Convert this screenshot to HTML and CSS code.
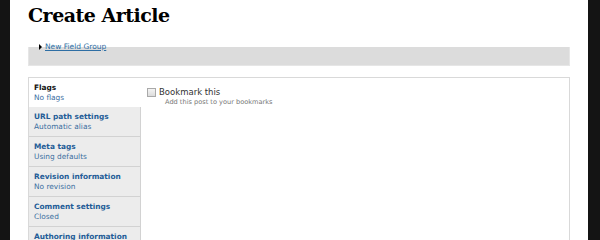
FILE: index.html
```html
<!DOCTYPE html>
<html>
<head>
<meta charset="utf-8">
<link rel="stylesheet" href="styles.css">
</head>
<body>
<div class="page">
  <h1 class="title">Create Article</h1>
  <fieldset class="group">
    <legend class="group-legend"><span class="tri"></span><a href="#" class="group-link">New Field Group</a></legend>
  </fieldset>
  <div class="vtabs">
    <ul class="tabs">
      <li class="tab selected"><strong class="tab-title">Flags</strong><span class="tab-sum">No flags</span></li>
      <li class="tab"><strong class="tab-title">URL path settings</strong><span class="tab-sum">Automatic alias</span></li>
      <li class="tab"><strong class="tab-title">Meta tags</strong><span class="tab-sum">Using defaults</span></li>
      <li class="tab"><strong class="tab-title">Revision information</strong><span class="tab-sum">No revision</span></li>
      <li class="tab"><strong class="tab-title">Comment settings</strong><span class="tab-sum">Closed</span></li>
      <li class="tab"><strong class="tab-title">Authoring information</strong><span class="tab-sum">By admin</span></li>
    </ul>
    <div class="pane">
      <label class="check"><span class="box"></span>Bookmark this</label>
      <div class="desc">Add this post to your bookmarks</div>
    </div>
  </div>
</div>
</body>
</html>
```

FILE: styles.css
```css
html, body {
  margin: 0;
  padding: 0;
  background: #141414;
  height: 240px;
  overflow: hidden;
}
.page {
  margin: 0 12px 0 10px;
  background: #fff;
  height: 240px;
  padding: 0 18px 0 18px;
  box-sizing: border-box;
  font-family: "DejaVu Sans", Verdana, sans-serif;
  overflow: hidden;
}
.title {
  margin: 0;
  padding-top: 3px;
  font-family: "DejaVu Serif", Georgia, serif;
  font-weight: bold;
  font-size: 19px;
  line-height: 24px;
  color: #000;
  letter-spacing: -0.5px;
}
.group {
  margin: 16px 0 0 0;
  padding: 0;
  height: 23px;
  box-sizing: border-box;
  background: #dcdcdc;
  border: 1px solid #e6e6e6;
  border-top: none;
}
.group-legend {
  padding: 0;
  margin-left: 10px;
  font-size: 7.5px;
  line-height: 8px;
  display: flex;
  align-items: center;
  gap: 3px;
}
.tri {
  width: 0;
  height: 0;
  border-left: 3px solid #000;
  border-top: 3px solid transparent;
  border-bottom: 3px solid transparent;
}
.group-link {
  color: #2e6ea4;
  text-decoration: underline;
}
.vtabs {
  margin-top: 11px;
  border: 1px solid #d9d9d9;
  display: flex;
  height: 200px;
}
.tabs {
  list-style: none;
  margin: 0;
  padding: 0;
  width: 112px;
  flex: none;
}
.tab {
  height: 30px;
  box-sizing: border-box;
  background: #ececec;
  border-bottom: 1px solid #d2d2d2;
  border-right: 1px solid #d2d2d2;
  padding: 5px 0 0 5px;
  display: flex;
  flex-direction: column;
}
.tab.selected {
  background: #fff;
  border-right-color: #fff;
  border-bottom: none;
  height: 29px;
}
.tab-title {
  font-size: 7.4px;
  line-height: 10px;
  color: #235c97;
  white-space: nowrap;
}
.selected .tab-title { color: #111; }
.tab-sum {
  font-size: 7.4px;
  line-height: 10px;
  color: #3a6e9f;
  white-space: nowrap;
}
.pane {
  padding: 9px 0 0 6px;
}
.check {
  display: flex;
  align-items: center;
  gap: 3px;
  font-size: 8.5px;
  line-height: 10px;
  color: #333;
}
.box {
  width: 9px;
  height: 9px;
  border: 1px solid #a9a9a9;
  background: linear-gradient(#f4f4f4, #dcdcdc);
  box-sizing: border-box;
}
.desc {
  font-size: 6.6px;
  line-height: 9px;
  color: #777;
  margin: 1px 0 0 18px;
}
```
